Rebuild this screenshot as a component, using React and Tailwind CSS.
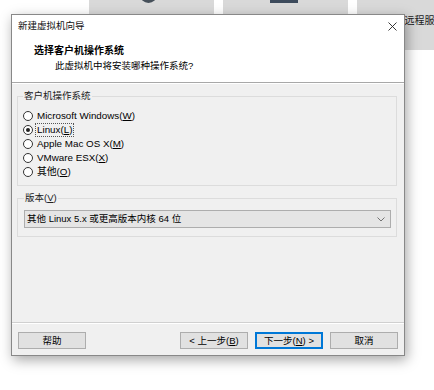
import React from 'react';

const FONT = "font-['Liberation_Sans','Noto_Sans_CJK_SC',sans-serif]";

function U({ children }) {
  return <span className="underline underline-offset-[1px] decoration-[0.5px]">{children}</span>;
}

function Radio({ checked, children, focused }) {
  return (
    <div className="flex items-center h-[14px]">
      <span className="w-[10px] h-[10px] rounded-full border border-[#333] bg-white flex items-center justify-center shrink-0">
        {checked && <span className="w-[4px] h-[4px] rounded-full bg-[#222]" />}
      </span>
      <span
        className={
          'ml-[3px] leading-[12px] px-[1px] ' +
          (focused ? 'outline outline-1 outline-dotted outline-[#555]' : '')
        }
      >
        {children}
      </span>
    </div>
  );
}

function Btn({ children, primary }) {
  return (
    <button
      className={
        'w-[68px] h-[17px] flex items-center justify-center text-[9.5px] leading-none text-black bg-[#e1e1e1] border ' +
        (primary ? 'border-[#0078d7] shadow-[inset_0_0_0_1px_#0078d7]' : 'border-[#adadad]')
      }
    >
      {children}
    </button>
  );
}

export default function App() {
  return (
    <div className={`relative w-[434px] h-[390px] bg-white overflow-hidden text-black ${FONT}`}>
      {/* desktop tiles behind the dialog */}
      <div className="flex gap-[9px] pl-[89px]">
        <div className="relative w-[125px] h-[50px] bg-[#d9d9d9] shrink-0">
          <span className="absolute left-[51px] top-[-14px] w-[17px] h-[17px] rounded-full bg-[#46505a]" />
        </div>
        <div className="relative w-[125px] h-[50px] bg-[#d9d9d9] shrink-0">
          <span className="absolute left-[47px] top-0 w-[28px] h-[3px] bg-[#3d4b5c]" />
        </div>
        <div className="relative w-[125px] h-[50px] bg-[#d9d9d9] shrink-0 flex justify-center pt-[15px]">
          <span className="text-[10px] leading-[12px] text-[#222]">连接远程服务器</span>
        </div>
      </div>

      {/* wizard dialog */}
      <div className="absolute left-[11px] top-[14px] w-[394px] h-[342px] border border-[#888] bg-[#f0f0f0] flex flex-col shadow-[2px_4px_12px_rgba(0,0,0,0.35)]">
        {/* title bar */}
        <div className="h-[21px] bg-white flex items-center justify-between pl-[6px] pr-[7px]">
          <span className="text-[9.5px] leading-none text-[#111]">新建虚拟机向导</span>
          <svg width="9" height="9" viewBox="0 0 9 9" className="mt-[1px]">
            <path d="M0.5 0.5 L8.5 8.5 M8.5 0.5 L0.5 8.5" stroke="#222" strokeWidth="0.9" />
          </svg>
        </div>

        {/* header */}
        <div className="h-[46px] bg-white pl-[22px] pt-[9px]">
          <div className="text-[10px] font-bold leading-[12px]">选择客户机操作系统</div>
          <div className="text-[9.5px] leading-[12px] mt-[3px] pl-[21px]">此虚拟机中将安装哪种操作系统?</div>
        </div>
        <div className="border-t border-[#a8a8a8]" />
        <div className="border-t border-white" />

        {/* body */}
        <div className="flex-1 pl-[5px] pr-[7px] pt-[6px] text-[9.8px]">
          <fieldset className="border border-[#dcdcdc] pl-[5px] pr-[5px] pt-[7px] pb-[6px]">
            <legend className="px-[1px] text-[9.5px] leading-[12px] text-[#222]">客户机操作系统</legend>
            <Radio>
              Microsoft Windows(<U>W</U>)
            </Radio>
            <Radio checked focused>
              Linux(<U>L</U>)
            </Radio>
            <Radio>
              Apple Mac OS X(<U>M</U>)
            </Radio>
            <Radio>
              VMware ESX(<U>X</U>)
            </Radio>
            <Radio>
              其他(<U>O</U>)
            </Radio>
          </fieldset>

          <fieldset className="mt-[6px] border border-[#dcdcdc] pl-[6px] pr-[5px] pt-[6px] pb-[8px]">
            <legend className="px-[1px] text-[9.5px] leading-[12px] text-[#222]">
              版本(<U>V</U>)
            </legend>
            <div className="h-[18px] bg-[#e5e5e5] border border-[#adadad] flex items-center justify-between pl-[2px] pr-[5px]">
              <span className="text-[9.5px] leading-none">其他 Linux 5.x 或更高版本内核 64 位</span>
              <svg width="8" height="5" viewBox="0 0 8 5">
                <path d="M0.5 0.5 L4 4 L7.5 0.5" fill="none" stroke="#555" strokeWidth="0.8" />
              </svg>
            </div>
          </fieldset>
        </div>

        {/* footer */}
        <div className="border-t border-[#d0d0d0]" />
        <div className="border-t border-white" />
        <div className="flex items-center pt-[8px] pb-[6px] px-[6px]">
          <Btn>帮助</Btn>
          <div className="flex-1" />
          <div className="flex gap-[7px]">
            <Btn>&lt; 上一步(<U>B</U>)</Btn>
            <Btn primary>
              下一步(<U>N</U>) &gt;
            </Btn>
            <Btn>取消</Btn>
          </div>
        </div>
      </div>
    </div>
  );
}
